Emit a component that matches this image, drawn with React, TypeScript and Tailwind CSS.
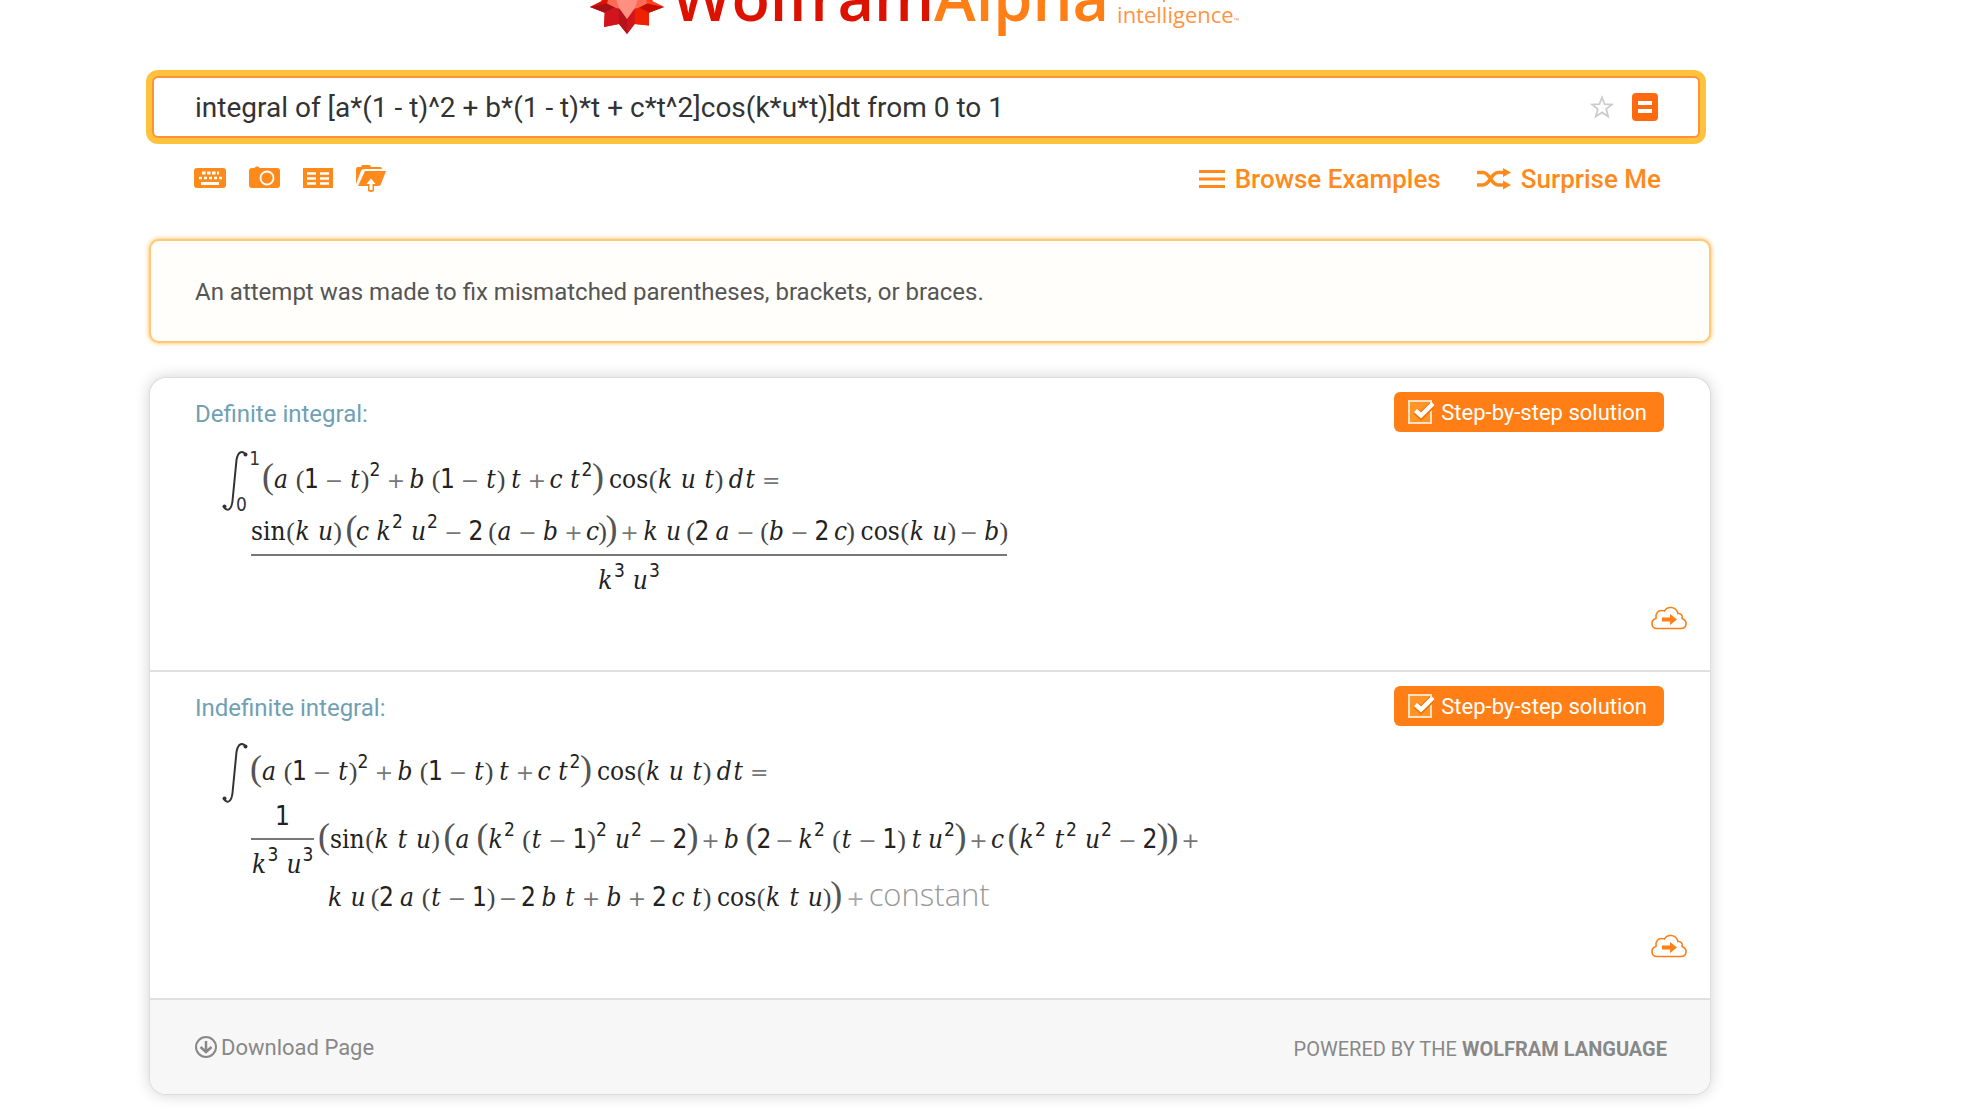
import React from "react";

type Kind = "letter" | "narrow" | "digit" | "paren" | "tall" | "op" | "word" | "sup" | "space" | "thin";
type Token = { kind: Kind; text: string };

const slots: Record<Kind, string> = {
  letter: "w-[14px] italic",
  narrow: "w-[10px] italic",
  digit: "w-[13px] font-['DejaVu_Sans_Condensed','DejaVu_Sans',sans-serif]",
  paren: "w-[6px] font-['Liberation_Serif',serif] text-[26px] text-[#444]",
  tall: "w-[8px] font-['Liberation_Serif',serif] text-[36px] text-[#555]",
  op: "w-[14px] font-['DejaVu_Sans',sans-serif] text-[22px] text-[#777]",
  word: "",
  sup: "w-[10px] font-['DejaVu_Sans_Condensed','DejaVu_Sans',sans-serif] text-[19px] relative bottom-[12px]",
  space: "w-[5px]",
  thin: "w-[3px]",
};

function tokenize(source: string): Token[] {
  const parts = source.match(/cos|sin|\^\d|./g) ?? [];
  return parts.map((p): Token => {
    if (p === "cos" || p === "sin") return { kind: "word", text: p };
    if (p[0] === "^") return { kind: "sup", text: p[1] };
    if (p === " ") return { kind: "space", text: "" };
    if (p === ",") return { kind: "thin", text: "" };
    if (p === "{") return { kind: "tall", text: "(" };
    if (p === "}") return { kind: "tall", text: ")" };
    if (p === "(" || p === ")") return { kind: "paren", text: p };
    if ("+−=".includes(p)) return { kind: "op", text: p };
    if (/\d/.test(p)) return { kind: "digit", text: p };
    return { kind: p === "t" || p === "c" ? "narrow" : "letter", text: p };
  });
}

function Expr({ children }: { children: string }) {
  return (
    <span className="flex h-8 items-baseline gap-[2px] font-['DejaVu_Serif_Condensed','DejaVu_Serif',serif] text-[26px] text-[#222]">
      {tokenize(children).map((t, i) => (
        <span key={i} className={`flex shrink-0 justify-center leading-8 ${slots[t.kind]}`}>
          {t.text}
        </span>
      ))}
    </span>
  );
}

function IntegralSign() {
  return (
    <svg width="26" height="62" viewBox="0 0 26 62" fill="none" className="shrink-0" aria-label="integral">
      <path d="M24 5C21 0 16 1 14.500 10L10.500 51C9.500 60 5 62 2 57" stroke="#333" strokeWidth="2" />
      <circle cx="23.500" cy="4.500" r="2" fill="#333" />
      <circle cx="2.500" cy="56.500" r="2" fill="#333" />
    </svg>
  );
}

function StepButton() {
  return (
    <button className="flex h-10 items-center gap-[7px] rounded-md bg-[#ff7e15] pr-[17px] pl-3.5 text-[22px] text-white">
      <svg width="26" height="26" viewBox="0 0 26 26" aria-hidden="true">
        <rect x="1" y="2" width="22" height="22" fill="#ff9429" stroke="#ffe0bf" strokeWidth="2" />
        <path d="M7.500 12L13 17L24 6" fill="none" stroke="#f07000" strokeWidth="7" />
        <path d="M7.500 11.500L13 16.500L25 4.500" fill="none" stroke="#fff" strokeWidth="4.500" />
      </svg>
      Step-by-step solution
    </button>
  );
}

function CloudButton() {
  return (
    <button aria-label="Save to cloud" className="block">
      <svg width="36" height="24" viewBox="0 0 36 24" aria-hidden="true">
        <path
          d="M6 22.500C2.500 22.500 1 20 1 17.500C1 15 2.500 13 5 12.500C4 8 7 4 11 4.500C12 4.500 13 4.500 13.500 5C16 0 25 0 27 7.500C30 7 32 9.500 31 12.500C34 13.500 35 15.500 35 17.500C35 20 33.500 22.500 30 22.500Z"
          fill="none"
          stroke="#ff7e15"
          strokeWidth="1.600"
        />
        <path d="M11 11.500H19V8L26 13.500L19 19V15.500H11Z" fill="#ff7e15" />
      </svg>
    </button>
  );
}

function Pod({ title, children }: { title: string; children: React.ReactNode }) {
  return (
    <section className="border-b-2 border-[#dfdfdf]">
      <div className="flex items-start justify-between pt-3.5 pr-[46px] pl-[45px]">
        <h2 className="pt-1.5 text-[24px] leading-8 text-[#6fa0b3]">{title}</h2>
        <StepButton />
      </div>
      {children}
    </section>
  );
}

function Spikey() {
  return (
    <svg width="74" height="74" viewBox="0 0 74 74" aria-hidden="true" className="shrink-0">
      <path d="M37 0L45 14L60 10L59 26L73 30L62 41L74 47L59 52.700L59 65.500L44.700 64L37 74L29 64L14 67L14.700 52.700L0 47L12 41L1 30L15 26L14 10L29 14Z" fill="#ee2200" />
      <path d="M12 41L28 36L25 48L0 47Z" fill="#dd1100" />
      <path d="M62 41L46 36L49 48L74 47Z" fill="#ff4422" />
      <path d="M0 47L17 43.500L26 47L14.700 52.700Z" fill="#a81018" />
      <path d="M74 47L57 43.500L48 47L59 52.700Z" fill="#c80d00" />
      <path d="M14 67L14.700 52.700L29 46L29 64Z" fill="#d0151f" />
      <path d="M59 65.500L59 52.700L45 46L44.700 64Z" fill="#ee2200" />
      <path d="M29 46L37 59L37 74L29 64Z" fill="#b5121b" />
      <path d="M45 46L37 59L37 74L44.700 64Z" fill="#d0151f" />
      <path d="M18 40L37 28L56 40L57 43.500L48 48L37 50L26 48L17 43.500Z" fill="#ff6a55" />
      <path d="M26 38L37 30L48 38L45 48L37 59L29 48Z" fill="#ff8f80" />
    </svg>
  );
}

export default function App() {
  return (
    <div className="min-h-screen bg-white pr-[252px] pl-[150px] font-[Roboto,sans-serif] text-[#333]">
      <header className="flex h-[76px] items-end justify-center overflow-hidden pr-1 pb-[42px]">
        <Spikey />
        <span className="ml-2 text-[63px] leading-[74px] font-semibold whitespace-nowrap font-['Open_Sans',sans-serif]">
          <span className="text-[#dd1100]">Wolfram</span>
          <span className="text-[#ff7e15]">Alpha</span>
        </span>
        <span className="ml-2 text-[22px] leading-[26px] text-[#ff9440] font-['Open_Sans',sans-serif]">
          computational
          <br />
          intelligence<span className="text-[7px]">™</span>
        </span>
      </header>

      <form
        className="mr-2.5 ml-0.5 flex h-[62px] items-center rounded-md border-2 border-[#ff9138] bg-white pr-10 pl-[41px] shadow-[0_0_0_6px_#ffc23d]"
        onSubmit={(e) => e.preventDefault()}
      >
        <input
          aria-label="Query"
          className="min-w-0 flex-1 pt-0.5 text-[28px] text-[#333] outline-none"
          defaultValue="integral of [a*(1 - t)^2 + b*(1 - t)*t + c*t^2]cos(k*u*t)]dt from 0 to 1"
        />
        <button type="button" aria-label="Favorite" className="mr-[18px]">
          <svg width="24" height="24" viewBox="0 0 24 24" aria-hidden="true">
            <path d="M12 2.500L14.600 9.200L22 9.500L16.200 14L18.200 21.500L12 17.400L5.800 21.500L7.800 14L2 9.500L9.400 9.200Z" fill="none" stroke="#ccc" strokeWidth="1.800" />
          </svg>
        </button>
        <button type="submit" aria-label="Compute" className="flex h-7 w-[26px] flex-col items-center justify-center gap-1 rounded bg-[#ff6a10]">
          <span className="h-1 w-3.5 bg-white" />
          <span className="h-1 w-3.5 bg-white" />
        </button>
      </form>

      <nav className="mt-6 flex h-[34px] items-center justify-between pr-[49px] pl-11 text-[26px] font-medium text-[#ff8a1c]">
        <div className="flex items-center gap-[23px] pb-0.5">
          <button aria-label="Keyboard">
            <svg width="32" height="28" viewBox="0 0 32 28" aria-hidden="true">
              <rect y="4" width="32" height="20" rx="3" fill="#ff8a1c" />
              <path d="M8 9H25" stroke="#fff" strokeWidth="3" strokeDasharray="3.500 1.500" />
              <path d="M5 14H28" stroke="#fff" strokeWidth="2.500" strokeDasharray="3 2" />
              <path d="M7 19.500H25" stroke="#fff" strokeWidth="3" />
            </svg>
          </button>
          <button aria-label="Image">
            <svg width="31" height="28" viewBox="0 0 31 28" aria-hidden="true">
              <path d="M3 4H5.500C6 2 10 2 10.500 4H28Q31 4 31 7V21Q31 24 28 24H3Q0 24 0 21V7Q0 4 3 4Z" fill="#ff8a1c" />
              <circle cx="18" cy="14" r="6.500" fill="none" stroke="#fff" strokeWidth="1.800" />
            </svg>
          </button>
          <button aria-label="Data">
            <svg width="30" height="28" viewBox="0 0 30 28" aria-hidden="true">
              <path d="M0 4H30V24H0Z" fill="#ff8a1c" />
              <path d="M4 9.500H13M17 9.500H26M4 14.500H13M17 14.500H26M4 19.500H13M17 19.500H26" stroke="#fff" strokeWidth="2.500" />
            </svg>
          </button>
          <button aria-label="Upload file">
            <svg width="30" height="28" viewBox="0 0 30 28" aria-hidden="true">
              <path d="M0 20V5Q0 3 2 3H5Q5 1 7 1H13Q15 1 15 3H24Q26 3 26 5H8Q6 5 5 7Z" fill="#ff8a1c" />
              <path d="M9 7H30L25 20Q24.500 22 22 22H18V27Q15 29 12 27V22H2Z" fill="#ff8a1c" />
              <path d="M15 14.500L19.500 20H16.500V26H13.500V20H10.500Z" fill="#fff" />
            </svg>
          </button>
        </div>
        <div className="flex items-center gap-9">
          <a href="#examples" className="flex items-center gap-2.5">
            <svg width="26" height="20" viewBox="0 0 26 20" aria-hidden="true">
              <path d="M0 2.500H26M0 10H26M0 17.500H26" stroke="#ff8a1c" strokeWidth="3" />
            </svg>
            Browse Examples
          </a>
          <a href="#surprise" className="flex items-center gap-2.5">
            <svg width="34" height="22" viewBox="0 0 34 22" aria-hidden="true">
              <path d="M0 4.500H6C13 4.500 14 17 21 17H27M0 17H6C13 17 14 4.500 21 4.500H27" fill="none" stroke="#ff8a1c" strokeWidth="3.500" />
              <path d="M26 0L34 4.500L26 9ZM26 12.500L34 17L26 21.500Z" fill="#ff8a1c" />
            </svg>
            Surprise Me
          </a>
        </div>
      </nav>

      <p className="-mx-px mt-[43px] rounded-[10px] border-2 border-[#ffca78] bg-[#fffefa] px-11 pt-[35px] pb-[33px] text-[24px] leading-8 text-[#555] shadow-[0_0_5px_#ffb84d]">
        An attempt was made to fix mismatched parentheses, brackets, or braces.
      </p>

      <main className="mt-[35px] overflow-hidden rounded-2xl bg-white shadow-[0_0_0_1px_#ddd,0_0_16px_rgba(0,0,0,0.2)]">
        <Pod title="Definite integral:">
          <div className="flex flex-col items-start pt-[18px] pl-[72px]">
            <div className="flex">
              <IntegralSign />
              <div className="-ml-3 flex w-6 flex-col items-center justify-between font-['DejaVu_Sans_Condensed','DejaVu_Sans',sans-serif] text-[19px] leading-4">
                <span className="self-end">1</span>
                <span className="self-start">0</span>
              </div>
              <div className="pt-2.5 pl-1">
                <Expr>{"{a (1 − t)^2 +,b (1 − t),t +,c t^2},cos(k u t),dt ="}</Expr>
              </div>
            </div>
            <div className="ml-[29px] flex flex-col items-center">
              <div className="border-b-2 border-[#777] pb-2.5">
                <Expr>{"sin(k u),{c k^2 u^2 − 2,(a − b +,c)},+,k u,(2,a − (b − 2,c),cos(k u),− b)"}</Expr>
              </div>
              <div className="pt-2">
                <Expr>{"k^3 u^3"}</Expr>
              </div>
            </div>
          </div>
          <div className="flex justify-end pt-2.5 pr-[23px] pb-10">
            <CloudButton />
          </div>
        </Pod>

        <Pod title="Indefinite integral:">
          <div className="flex flex-col items-start pt-4 pl-[72px]">
            <div className="flex">
              <IntegralSign />
              <div className="pt-2.5 pl-1">
                <Expr>{"{a (1 − t)^2 +,b (1 − t),t +,c t^2},cos(k u t),dt ="}</Expr>
              </div>
            </div>
            <div className="-mt-1 ml-[29px] flex">
              <div className="flex flex-col items-center">
                <div className="flex w-full justify-center border-b-2 border-[#777] pb-1.5">
                  <Expr>1</Expr>
                </div>
                <div className="px-px pt-2">
                  <Expr>{"k^3 u^3"}</Expr>
                </div>
              </div>
              <div className="pt-5 pl-1.5">
                <Expr>{"{sin(k t u),{a {k^2 (t − 1)^2 u^2 − 2},+,b {2,−,k^2 (t − 1),t,u^2},+,c,{k^2 t^2 u^2 − 2}},+"}</Expr>
              </div>
            </div>
            <div className="-mt-0.5 ml-[106px] flex h-8 items-baseline">
              <Expr>{"k u,(2,a (t − 1),−,2,b t + b + 2,c t),cos(k t u)}"}</Expr>
              <span className="ml-1.5 leading-8 text-[22px] text-[#aaa] font-['DejaVu_Sans',sans-serif]">+</span>
              <span className="ml-1 leading-8 text-[31px] font-light text-[#999] font-['Open_Sans',sans-serif]">constant</span>
            </div>
          </div>
          <div className="flex justify-end pt-6 pr-[23px] pb-10">
            <CloudButton />
          </div>
        </Pod>

        <footer className="flex h-[94px] items-center justify-between bg-[#f7f7f7] pr-[43px] pl-[45px] text-[#888]">
          <button className="flex items-center gap-1 text-[22px]">
            <svg width="22" height="22" viewBox="0 0 22 22" fill="none" stroke="#888" aria-hidden="true">
              <circle cx="11" cy="11" r="10" strokeWidth="2" />
              <path d="M11 5V15M5.500 11L11 16L16.500 11" strokeWidth="2.500" />
            </svg>
            Download Page
          </button>
          <span className="pt-1 text-[20px]">
            POWERED BY THE <a href="#language" className="font-bold">WOLFRAM LANGUAGE</a>
          </span>
        </footer>
      </main>
    </div>
  );
}
